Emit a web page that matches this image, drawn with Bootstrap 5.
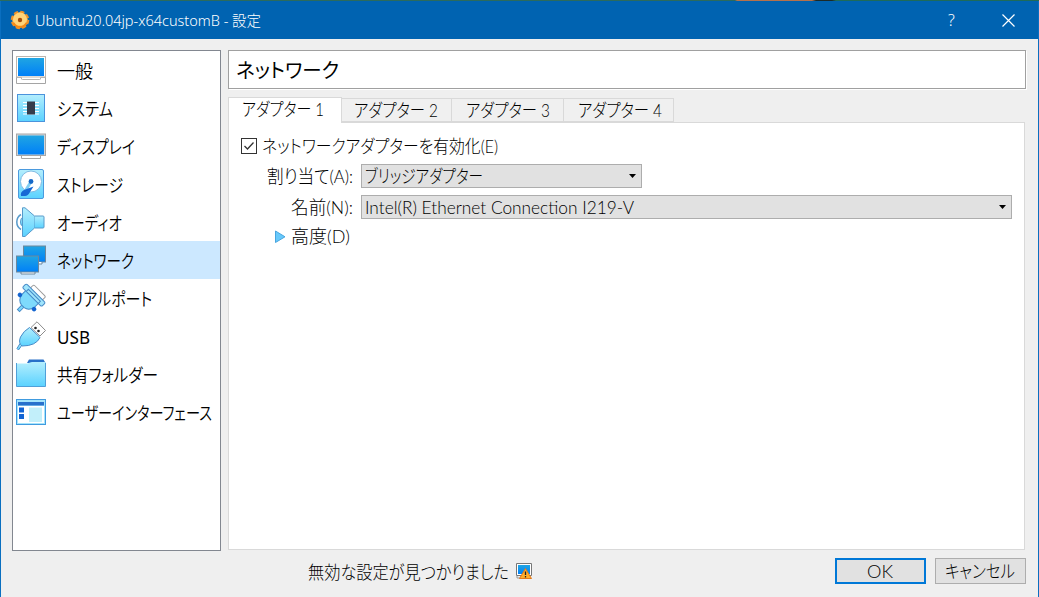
<!DOCTYPE html>
<html lang="ja">
<head>
<meta charset="utf-8">
<meta name="viewport" content="width=device-width, initial-scale=1">
<title>Ubuntu20.04jp-x64customB - 設定</title>
<link href="https://cdn.jsdelivr.net/npm/bootstrap@5.3.0/dist/css/bootstrap.min.css" rel="stylesheet">
<style>
body{font-family:Lato,"Noto Sans CJK JP",sans-serif;font-weight:300;font-size:18px;line-height:24px;color:#000;background:#f0f0f0;overflow:hidden}
.win{width:1039px;height:597px;border:solid #0a6fc0;border-width:0 1px;background:#efefef}
.desk{height:1px;margin:0 -1px;background:linear-gradient(90deg,#2c6b5c 0 735px,#b5714b 737px 812px,#1c2a28 816px 832px,#1f6b58 836px)}
.bar{height:38px;background:#0063b1;color:#fff;font-size:15px;padding-left:9px}
.bar .fit{margin-left:5px}
.bar .fit,.bar .help{font-family:"Noto Sans","Noto Sans CJK JP",sans-serif}
.help{font-size:16px;width:9px;margin-right:45px}
.main{padding:11px 12px 0 11px;height:558px}
.side{width:209px;height:501px;border:1px solid #828790;background:#fff}
.side .list-group-item{height:38px;margin:0;padding:0 0 0 3px;border:0;border-radius:0;background:#fff;color:#000;font-family:"Noto Sans","Noto Sans CJK JP",sans-serif;font-weight:350;font-size:18px;line-height:24px}
.side .list-group-item.active{background:#cce8ff;color:#000;margin:0}
.side .fit{margin-top:2px}
.side .latin{font-weight:400}
.side svg{width:30px;height:30px;margin-right:11px;flex:none}
.right{margin-left:7px}
.head{width:798px;height:39px;border:1px solid #a0a0a0;box-shadow:1px 1px #fff;background:#fff;padding:1px 0 0 7px;font-size:20px;font-weight:400}
.nav-tabs{margin-top:8px;height:26px;border:0;position:relative;z-index:1;align-items:flex-end}
.nav-tabs .nav-link{height:24px;padding:0 0 0 12px;margin:0 0 1px;border:1px solid #d9d9d9;border-left:0;border-radius:0;background:#f0f0f0;color:#000;line-height:21px;text-align:left}
.nav-tabs .nav-link.active{width:114px;height:26px;margin:0;border:1px solid #d9d9d9;border-bottom:0;background:#fff;color:#000;padding:0 0 2px 13px}
.pane{width:797px;height:428px;margin-top:-1px;border:1px solid #d9d9d9;background:#fff;padding:11px 12px}
.fit{display:inline-block;white-space:nowrap;transform-origin:0 50%;font-feature-settings:"palt"}
.pane .fit{margin-top:-1px}
.tick{width:16px;height:16px;border:1px solid #333;background:#fff;margin-right:5px}
.lab{width:120px;padding-right:8px}
.combo{height:24px;border:1px solid #adadad;background:#e1e1e1;border-radius:0;padding:0 5px 0 3px;font:inherit;line-height:22px;color:#000}
.foot{height:26px;margin-top:8px}
.push{width:91px;height:26px;border-radius:0;border:1px solid #adadad;background:#e1e1e1;padding:0 2px 0 0;font-size:18px;font-weight:300;line-height:22px;color:#000}
.push.def{border:2px solid #0078d7}
</style>
</head>
<body>
<svg width="0" height="0" class="position-absolute">
<defs>
<linearGradient id="scr" x2="0" y2="1"><stop stop-color="#20a5e2"/><stop offset="1" stop-color="#0080f8"/></linearGradient>
<linearGradient id="sky" x2="0" y2="1"><stop stop-color="#b4eefd"/><stop offset="1" stop-color="#5ad2ff"/></linearGradient>
</defs>
</svg>
<div class="win">
<div class="desk"></div>
<header class="bar d-flex align-items-center">
<svg width="20" height="20" viewBox="0 0 20 20"><circle cx="10" cy="10" r="7.8" fill="#f9b445" stroke="#ef9228" stroke-width="3" stroke-dasharray="4 2.12"/><circle cx="10" cy="9.6" r="7" fill="#ffd479"/><path d="M3.5 13a7.4 7.4 0 0 0 13 0" fill="none" stroke="#f58a16" stroke-width="2"/><circle cx="10" cy="10" r="2.2" fill="#a94a05"/></svg>
<span class="fit" data-w="226">Ubuntu20.04jp-x64customB - 設定</span>
<span class="help ms-auto">?</span>
<svg width="13" height="13" style="margin-right:23px"><path d="M.5.5l12 12M12.5.5l-12 12" stroke="#fff" stroke-width="1.2"/></svg>
</header>
<main class="main d-flex">
<nav class="side list-group rounded-0">
<a class="list-group-item d-flex align-items-center"><svg viewBox="0 0 30 30"><path d="M.5 1.500h29v27H.5z" fill="#fff" stroke="#a5a5a5"/><path d="M.5 22.500h5v1.500q0 .5 1 .5h17q1 0 1-.5v-1.500h5" fill="#fff" stroke="#b5b5b5"/><rect x=".5" y="1.500" width="29" height="20.500" fill="#fff" stroke="#bcb5ae"/><rect x="2" y="3" width="26" height="18" fill="url(#scr)"/></svg><span class="fit" data-w="36">一般</span></a>
<a class="list-group-item d-flex align-items-center"><svg viewBox="0 0 30 30"><rect x="1.500" y="1.500" width="27" height="27" fill="url(#sky)" stroke="#4b93dc"/><path d="M7 9.500h16M7 12.500h16M7 15.500h16M7 18.500h16M7 21h16" stroke="#fff" stroke-width="1.200"/><rect x="11" y="8.500" width="8" height="13" fill="#353d4c"/></svg><span class="fit" data-w="56">システム</span></a>
<a class="list-group-item d-flex align-items-center"><svg viewBox="0 0 30 30"><path d="M5.500 24v3.500h19V24" fill="#fff" stroke="#a5a5a5"/><rect x=".5" y="3" width="29" height="21.500" fill="#cfd5da" stroke="#a7a7a7"/><rect x="2" y="4.500" width="26" height="19" fill="url(#scr)"/></svg><span class="fit" data-w="78">ディスプレイ</span></a>
<a class="list-group-item d-flex align-items-center"><svg viewBox="0 0 30 30"><rect x="2.500" y=".5" width="25" height="29" rx="1.500" fill="url(#sky)" stroke="#4b9ade"/><circle cx="15" cy="12.500" r="10.500" fill="#fff" stroke="#83bbe2"/><path d="M14.500 13.500L8 24" stroke="#82cdf2" stroke-width="3"/><circle cx="15" cy="12.500" r="2.400" fill="#1668c7"/><path d="M17.500 17.500L14 23q-2 4-5 4H5q-1-4 3-6z" fill="#1668d5"/></svg><span class="fit" data-w="66">ストレージ</span></a>
<a class="list-group-item d-flex align-items-center"><svg viewBox="0 0 30 30" fill="url(#sky)" stroke="#579acb"><path d="M7 10q-2.500 1-2.500 5T7 19z"/><path d="M6.500.8h2.500L18.500 9v12L9 29.500H6.500z"/><path d="M18.500 9h8.500q1 0 1 1v10q0 1-1 1h-8.500"/><path d="M5 7.500Q.8 10 .8 15T5 22.500" fill="none" stroke-width="1.500"/></svg><span class="fit" data-w="65">オーディオ</span></a>
<a class="list-group-item active d-flex align-items-center"><svg viewBox="0 0 30 30" stroke="#6d879c"><rect x="7.500" y="1" width="22" height="16" fill="url(#scr)"/><path d="M22 17v2h4v-2" fill="#fff"/><path d="M5 27v2h14v-2" fill="#fff"/><rect x=".5" y="11" width="22" height="16" fill="url(#scr)"/></svg><span class="fit" data-w="77">ネットワーク</span></a>
<a class="list-group-item d-flex align-items-center"><svg viewBox="0 0 30 30"><g transform="translate(17 13) rotate(45)" fill="#7edafc" stroke="#478bc8"><rect x="-7.500" y="-8.500" width="17" height="5" rx="1.500" fill="#fff" stroke="#9b9b9b"/><path d="M-1.500 13v7.500h3V13"/><path d="M-9 1h18v6q-1.500 6.500-7 7.500h-4q-5.500-1-7-7.500z"/><rect x="-13.500" y="-4" width="27" height="5.500" rx="1.500" fill="#a0e5fc"/><path d="M-8 1.500V-1.500H9V1.500" fill="none"/><circle cx="-10" cy="8.500" r="2.300" fill="#1465d0" stroke="none"/><circle cx="10" cy="8.500" r="2.300" fill="#1465d0" stroke="none"/></g></svg><span class="fit" data-w="95">シリアルポート</span></a>
<a class="list-group-item d-flex align-items-center"><svg viewBox="0 0 30 30" fill="url(#sky)" stroke="#478bc8"><path d="M15 6.500L21 .8l8.500 8.700L24 15z" fill="#fff" stroke="#8c8c8c"/><circle cx="19.500" cy="7" r="1.300" fill="#222" stroke="none"/><circle cx="22.500" cy="10" r="1.300" fill="#222" stroke="none"/><path d="M6 24l-3.500 5L1 27.500l3-5"/><path d="M13.500 6.500L24 16.500Q20 25 6 25 2 22 4.500 16q3-6 9-9.500z"/></svg><span class="fit latin" data-w="33">USB</span></a>
<a class="list-group-item d-flex align-items-center"><svg viewBox="0 0 30 30"><path d="M11 4l2-3.500h14.500l2 3.500z" fill="#2870c8"/><path d="M.5 4.500h11l2.500-1q1-.5 2-.5h13.500v24.500H.5z" fill="url(#sky)"/><path d="M.5 4v23.500h29V4" fill="none" stroke="#50a0d8"/></svg><span class="fit" data-w="101">共有フォルダー</span></a>
<a class="list-group-item d-flex align-items-center"><svg viewBox="0 0 30 30"><rect x=".5" y="2.500" width="29" height="25" fill="#a4e4fc" stroke="#409bdf"/><path d="M2 5h26v3.500H2z" fill="#2870cc"/><path d="M2 9h26v17H2z" fill="#fff"/><path d="M3 10.500h5v5H3zM3 17h5v5H3z" fill="#1264d4"/><path d="M13 10.500h13V25H13z" fill="#c2effa"/></svg><span class="fit" data-w="155">ユーザーインターフェース</span></a>
</nav>
<section class="right">
<div class="head d-flex align-items-center"><span class="fit" data-w="103">ネットワーク</span></div>
<div class="nav nav-tabs">
<button class="nav-link active"><span class="fit" data-w="82">アダプター 1</span></button>
<button class="nav-link" style="width:110px"><span class="fit" data-w="84">アダプター 2</span></button>
<button class="nav-link" style="width:112px;padding-left:14px"><span class="fit" data-w="84">アダプター 3</span></button>
<button class="nav-link" style="width:110px;padding-left:14px"><span class="fit" data-w="84">アダプター 4</span></button>
</div>
<div class="pane">
<div class="d-flex align-items-center" style="height:24px"><span class="tick d-flex"><svg width="14" height="14"><path d="M2.500 7l3 3 6-6.500" fill="none" stroke="#333" stroke-width="1.300"/></svg></span><span class="fit" data-w="236">ネットワークアダプターを有効化(E)</span></div>
<div class="d-flex" style="margin-top:6px"><div class="lab text-end"><span class="fit" data-w="86">割り当て(A):</span></div><button class="combo d-flex align-items-center" style="width:281px"><span class="fit" data-w="118">ブリッジアダプター</span><svg width="7" height="4" class="ms-auto"><path d="M0 0h7L3.500 4z"/></svg></button></div>
<div class="d-flex" style="margin-top:7px"><div class="lab text-end"><span class="fit" data-w="62">名前(N):</span></div><button class="combo d-flex align-items-center" style="width:651px"><span class="fit" data-w="269">Intel(R) Ethernet Connection I219-V</span><svg width="7" height="4" class="ms-auto"><path d="M0 0h7L3.500 4z"/></svg></button></div>
<div class="d-flex align-items-center" style="margin:6px 0 0 34px"><svg width="11" height="14" style="margin-right:5px"><path d="M.5 1v11.500L10 6.800z" fill="#67c9fb" stroke="#48a5df"/></svg><span class="fit" data-w="59">高度(D)</span></div>
</div>
<div class="foot d-flex align-items-center"><span class="fit" data-w="201" style="margin:1px 0 0 80px">無効な設定が見つかりました</span>
<svg width="16" height="16" viewBox="0 0 16 16" style="margin-left:7px"><path d="M.5.5h15v12H.5z" fill="#fff" stroke="#777"/><path d="M2 2h12v9H2z" fill="url(#scr)"/><path d="M1 13v2h5" fill="none" stroke="#999"/><path d="M9.500 5.500L15.500 15.500H3.500z" fill="#ffad2a" stroke="#e0791d"/><path d="M9.500 8.500v3.500M9.500 13v1.500" stroke="#222" stroke-width="1.300"/></svg>
<button class="btn push def ms-auto"><span class="fit" data-w="26">OK</span></button><button class="btn push" style="margin-left:9px"><span class="fit" data-w="70">キャンセル</span></button></div>
</section>
</main>
</div>
<script src="https://cdn.jsdelivr.net/npm/bootstrap@5.3.0/dist/js/bootstrap.bundle.min.js"></script>
<script>
// Scale every label horizontally to its nominal width, keeping the flow box in step.
document.querySelectorAll('.fit').forEach(el => {
  const want = +el.dataset.w, have = el.getBoundingClientRect().width;
  el.style.width = want + 'px';
  el.style.textAlign = 'left';
  el.style.transform = `scaleX(${want / have})`;
  el.style.flex = 'none';
});
</script>
</body>
</html>
